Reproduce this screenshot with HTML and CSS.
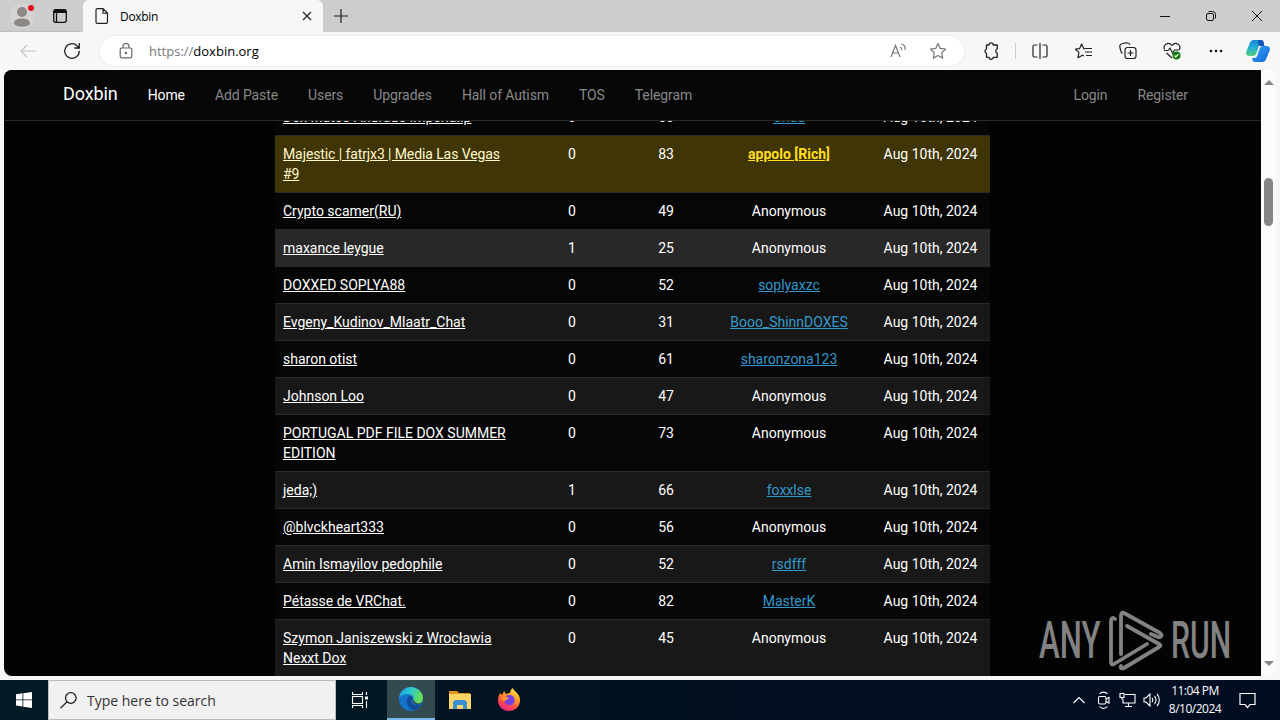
FILE: index.html
```html
<!doctype html>
<html lang="en">
<head>
    <meta charset="UTF-8">
    <title>Doxbin</title>
    <link rel="stylesheet" href="styles.css">
</head>
<body>
    <!-- Tab strip -->
    <div class="tabs">
        <div class="tabs-left">
            <svg class="avatar" width="26" height="26" viewBox="0 0 26 26"><circle cx="13" cy="13" r="12.5" fill="#d6d4d2"/><circle cx="13" cy="9" r="5" fill="#8b8886"/><path d="M5 21c0-4 3-5.500 8-5.500s8 1.500 8 5.500c-3 3.500-13 3.500-16 0z" fill="#8b8886"/><circle cx="22" cy="5" r="3" fill="#e00b1c"/></svg>
            <svg class="workspaces" width="16" height="16" viewBox="0 0 16 16" fill="none" stroke="#111" stroke-width="1.300"><rect x="1.700" y="1.700" width="12.600" height="12.600" rx="2"/><path d="M2 3.500h12" stroke-width="3"/><path d="M4.500 4v10"/></svg>
        </div>
        <div class="tab">
            <svg width="14" height="16" viewBox="0 0 14 16" fill="none" stroke="#222" stroke-width="1.200"><path d="M2.500.600h5.500l4.500 4.500v8.800a1.500 1.500 0 0 1-1.500 1.500h-8.500a1.500 1.500 0 0 1-1.500-1.500v-11.800a1.500 1.500 0 0 1 1.500-1.500zM8 .600v4.500h4.500"/></svg>
            <span class="tab-title">Doxbin</span>
            <svg width="10" height="10" viewBox="0 0 10 10" stroke="#222" stroke-width="1.200"><path d="M1 1l8 8M9 1l-8 8"/></svg>
        </div>
        <svg class="new-tab" width="14" height="14" viewBox="0 0 14 14" stroke="#222" stroke-width="1.200"><path d="M7 0v14M0 7h14"/></svg>
        <div class="window-buttons">
            <svg width="12" height="12" viewBox="0 0 12 12" stroke="#111"><path d="M1 6.500h10"/></svg>
            <svg width="12" height="12" viewBox="0 0 12 12" fill="none" stroke="#111"><rect x="1.500" y="3.500" width="7" height="7" rx="1.500"/><path d="M3.500 1.500h4a3 3 0 0 1 3 3v4"/></svg>
            <svg width="12" height="12" viewBox="0 0 12 12" stroke="#111"><path d="M1 1l10 10M11 1l-10 10"/></svg>
        </div>
    </div>

    <!-- Address bar -->
    <div class="toolbar">
        <svg class="back" width="16" height="14" viewBox="0 0 16 14" fill="none" stroke="#c4c4c4" stroke-width="1.200"><path d="M16 7h-15M7 1l-6 6 6 6"/></svg>
        <svg class="reload" width="18" height="18" viewBox="0 0 18 18" fill="none" stroke="#222" stroke-width="1.300"><path d="M16.300 9a7.300 7.300 0 1 1-2.300-5.300l2 2M16.300 1v5h-5"/></svg>
        <div class="address">
            <svg width="14" height="16" viewBox="0 0 14 16" fill="none" stroke="#666" stroke-width="1.200"><rect x="1.200" y="5" width="11.600" height="9.800" rx="1.500"/><path d="M4 5v-1.500a3 3 0 0 1 6 0v1.500"/><circle cx="7" cy="10" r=".6"/></svg>
            <span class="url"><span class="scheme">https://</span>doxbin.org</span>
            <svg class="read-aloud" width="17" height="16" viewBox="0 0 17 16" fill="none" stroke="#777" stroke-width="1.200"><path d="M1 14l4.500-11.500 4.500 11.500M2.700 10h5.600M10 4c1.300.5 1.700 1.700 1.700 3M11 1c3 .5 4.500 3 4.200 6"/></svg>
            <svg width="18" height="18" viewBox="0 0 18 18" fill="none" stroke="#777" stroke-width="1.200"><path d="M9 1.500l2.300 4.900 5.300.700-3.900 3.700 1 5.300-4.700-2.600-4.700 2.600 1-5.300-3.900-3.700 5.300-.700z" stroke-linejoin="round"/></svg>
        </div>
        <div class="actions">
            <svg class="extensions" width="18" height="18" viewBox="0 0 18 18" fill="none" stroke="#222" stroke-width="1.300"><path d="M4.500 3h2.500a2.100 2.100 0 0 1 4.200 0h4v4a2.100 2.100 0 0 0 0 4v4.300h-4a2.100 2.100 0 0 1-4.200 0h-2.500v-4a2.200 2.200 0 0 1 0-4.200z" stroke-linejoin="round"/></svg>
            <span class="divider"></span>
            <svg width="18" height="18" viewBox="0 0 18 18" fill="none" stroke="#222" stroke-width="1.200"><path d="M6.500 3h-3a1.500 1.500 0 0 0-1.500 1.500v9a1.500 1.500 0 0 0 1.500 1.500h3M11.500 3h3a1.500 1.500 0 0 1 1.500 1.500v9a1.500 1.500 0 0 1-1.500 1.500h-3M9 1v16"/></svg>
            <svg width="18" height="18" viewBox="0 0 18 18" fill="none" stroke="#222" stroke-width="1.200"><path d="M10 7l-1.200-.3-2.200-4.700-2 4.600-4.100.6 3.400 3.200-.9 5.400 4.500-2.600 1.500.8M10 6.500h7M10 10h7M11 13.500h6" stroke-linejoin="round"/></svg>
            <svg width="18" height="18" viewBox="0 0 18 18" fill="none" stroke="#222" stroke-width="1.200"><rect x="6" y="5.500" width="11" height="11" rx="2.500"/><path d="M11.500 8v6M8.500 11h6M3.500 11.500c-2-1-3-7.500-2.500-8.500.5-1.500 6.500-2.500 8-2 1 .3 1.600 1 1.800 2"/></svg>
            <svg width="18" height="18" viewBox="0 0 18 18" fill="none" stroke="#222" stroke-width="1.200"><path d="M1.500 7.500c-2-5 4-8.500 7.500-4 3.500-4.500 9.500-1 7.500 4M1 8.500h4l2-2.500 2.500 5 2-3h5M3.500 11l5.500 5"/><circle cx="13.500" cy="13.500" r="4" fill="#107c10" stroke="none"/><path d="M11.500 13.500l1.300 1.400 2.700-2.800" stroke="#fff"/></svg>
            <svg width="18" height="18" viewBox="0 0 18 18" fill="#111"><circle cx="4" cy="9" r="1.300"/><circle cx="9" cy="9" r="1.300"/><circle cx="14" cy="9" r="1.300"/></svg>
        </div>
        <svg class="copilot" width="24" height="24" viewBox="0 0 24 24">
            <defs>
                <linearGradient id="cp-a" x1="0" y1="0" x2="0" y2="1"><stop offset="0" stop-color="#1587dd"/><stop offset=".5" stop-color="#25afd0"/><stop offset="1" stop-color="#56d07a"/></linearGradient>
                <linearGradient id="cp-b" x1="0" y1="0" x2="1" y2="1"><stop offset="0" stop-color="#36a4f4"/><stop offset="1" stop-color="#1265dc"/></linearGradient>
            </defs>
            <path d="M8 1h7c2 0 2.500 1.500 3 4h-2c-2 0-3 1-3.500 3l-2 6c-.6 2-1.500 3-4 3h-3c-3 0-4-2-3-5l3-7c1-3 2-4 4.500-4z" fill="url(#cp-a)"/>
            <path d="M16 23h-7c-2 0-2.500-1.500-3-4h2c2 0 3-1 3.500-3l2-6c.6-2 1.500-3 4-3h3c3 0 4 2 3 5l-3 7c-1 3-2 4-4.500 4z" fill="url(#cp-b)"/>
            <path d="M12 1h3c2 0 2.500 1.500 3 4l.5 2h-4c-1.500 0-2.500-1-2.500-6z" fill="#1455b4"/>
        </svg>
    </div>

    <!-- Page -->
    <div class="viewport">
        <div class="page">
            <nav class="navbar">
                <a class="brand">Doxbin</a>
                <a class="active">Home</a>
                <a>Add Paste</a>
                <a>Users</a>
                <a>Upgrades</a>
                <a>Hall of Autism</a>
                <a>TOS</a>
                <a>Telegram</a>
                <a class="push-right">Login</a>
                <a>Register</a>
            </nav>
            <div class="content">
                <table>
                    <colgroup><col class="col-title"><col class="col-comments"><col class="col-views"><col class="col-user"><col class="col-date"></colgroup>
                    <tr><td><a>Dox Mateo Andrade Imperial.p</a></td><td>0</td><td>60</td><td><a class="user">Chad</a></td><td>Aug 10th, 2024</td></tr>
                    <tr class="rich"><td><a>Majestic | fatrjx3 | Media Las Vegas #9</a></td><td>0</td><td>83</td><td><a class="user">appolo [Rich]</a></td><td>Aug 10th, 2024</td></tr>
                    <tr><td><a>Crypto scamer(RU)</a></td><td>0</td><td>49</td><td>Anonymous</td><td>Aug 10th, 2024</td></tr>
                    <tr class="hovered"><td><a>maxance leygue</a></td><td>1</td><td>25</td><td>Anonymous</td><td>Aug 10th, 2024</td></tr>
                    <tr><td><a>DOXXED SOPLYA88</a></td><td>0</td><td>52</td><td><a class="user">soplyaxzc</a></td><td>Aug 10th, 2024</td></tr>
                    <tr><td><a>Evgeny_Kudinov_Mlaatr_Chat</a></td><td>0</td><td>31</td><td><a class="user">Booo_ShinnDOXES</a></td><td>Aug 10th, 2024</td></tr>
                    <tr><td><a>sharon otist</a></td><td>0</td><td>61</td><td><a class="user">sharonzona123</a></td><td>Aug 10th, 2024</td></tr>
                    <tr><td><a>Johnson Loo</a></td><td>0</td><td>47</td><td>Anonymous</td><td>Aug 10th, 2024</td></tr>
                    <tr><td><a>PORTUGAL PDF FILE DOX SUMMER EDITION</a></td><td>0</td><td>73</td><td>Anonymous</td><td>Aug 10th, 2024</td></tr>
                    <tr><td><a>jeda;)</a></td><td>1</td><td>66</td><td><a class="user">foxxlse</a></td><td>Aug 10th, 2024</td></tr>
                    <tr><td><a>@blvckheart333</a></td><td>0</td><td>56</td><td>Anonymous</td><td>Aug 10th, 2024</td></tr>
                    <tr><td><a>Amin Ismayilov pedophile</a></td><td>0</td><td>52</td><td><a class="user">rsdfff</a></td><td>Aug 10th, 2024</td></tr>
                    <tr><td><a>Pétasse de VRChat.</a></td><td>0</td><td>82</td><td><a class="user">MasterK</a></td><td>Aug 10th, 2024</td></tr>
                    <tr><td><a>Szymon Janiszewski z Wrocławia Nexxt Dox</a></td><td>0</td><td>45</td><td>Anonymous</td><td>Aug 10th, 2024</td></tr>
                </table>
            </div>
        </div>
        <div class="scrollbar">
            <span class="arrow-up"></span>
            <span class="thumb"></span>
            <span class="arrow-down"></span>
        </div>
    </div>

    <div class="watermark">
        <span class="wm-text"><span class="wm-any">ANY</span></span>
        <svg width="56" height="62" viewBox="0 0 56 62" fill="none" stroke="#828282" stroke-width="3.800" stroke-linejoin="round" stroke-linecap="round"><path d="M7 9c-2-2-4-1-4 2v41c0 2 1 3 3 2l33-20"/><path d="M13 44v-38c0-3 1-4 3-3l36 20c3 2 1 5-2 4l-7-3"/><path d="M19 16l32 18c2 1 2 2 0 3l-35 21c-2 1-4 0-3-2"/></svg>
        <span class="wm-text"><span class="wm-run">RUN</span></span>
    </div>

    <!-- Taskbar -->
    <div class="taskbar">
        <div class="start"><svg width="16" height="16" viewBox="0 0 16 16" fill="#fff"><path d="M0 2.300l6.500-1v6.200h-6.500zM7.300 1.200l8.700-1.200v7.500h-8.700zM0 8.300h6.500v6.300l-6.500-1zM7.300 8.300h8.700v7.700l-8.700-1.200z"/></svg></div>
        <div class="search">
            <svg width="17" height="17" viewBox="0 0 17 17" fill="none" stroke="#222" stroke-width="1.300"><circle cx="10.800" cy="6" r="5.300"/><path d="M7 9.800l-6.500 6.500"/></svg>
            <span>Type here to search</span>
        </div>
        <div class="app"><svg width="18" height="18" viewBox="0 0 18 18" fill="none" stroke="#fff" stroke-width="1.100"><path d="M1.500 1v2.500h10v-2.500M1.500 17v-2.500h10v2.500M15.500 1v3M15.500 10v7"/><rect x="1.500" y="5.500" width="10" height="7"/><path d="M14 7h3" stroke-width="3"/></svg></div>
        <div class="app running">
            <svg width="24" height="24" viewBox="0 0 24 24">
                <defs><linearGradient id="edge-a" x1="0" y1="0" x2="1" y2=".3"><stop offset="0" stop-color="#1b9de2"/><stop offset=".5" stop-color="#2cc8ce"/><stop offset="1" stop-color="#68dc58"/></linearGradient></defs>
                <circle cx="12" cy="12" r="12" fill="#1372ca"/>
                <path d="M0 11c1-7 6-11 12-11s12 5 12 11c0 4-3 6-6 6-3 0-5-1-4-3 2-4-1-7-5-7-4 0-7 1-9 4z" fill="url(#edge-a)"/>
                <path d="M9 10c-3 5 0 13 7 13 3-1 5-3 6.500-6-4 2-10 2-10-2 0-2 1-2 1-3 0-3-3-4-4.500-2z" fill="#124b95"/>
                <path d="M24 15c-2 3-9 4-10 .5-1-1 .3-1.500.8-3.500 0 4 5 6 9.200 3z" fill="#334b50"/>
            </svg>
        </div>
        <div class="app"><svg width="22" height="20" viewBox="0 0 22 20"><path d="M0 1h8l2 2h11v4h-21z" fill="#e3961c"/><path d="M0 4h22v15h-22z" fill="#fbd568"/><path d="M4 19v-7l2-2h10l2 2v7h-4v-4h-6v4z" fill="#3b8fd1"/></svg></div>
        <div class="app">
            <svg width="24" height="24" viewBox="0 0 24 24">
                <defs><linearGradient id="ff" x1=".8" y1="0" x2=".3" y2="1"><stop offset="0" stop-color="#fff04a"/><stop offset=".4" stop-color="#ff9a28"/><stop offset=".75" stop-color="#ff4250"/><stop offset="1" stop-color="#e4238c"/></linearGradient></defs>
                <path d="M3 5l2 2 2-4 2 3c2-1 3-1 4-1 0-2 1-4 3-5 0 3 7 5 7 12 0 7-5 11-11 11s-11-4-11-11c0-3 1-5 2-7z" fill="url(#ff)"/>
                <circle cx="12.500" cy="12" r="5.200" fill="#7542e5"/><path d="M5 9c3-1 5 0 7 1-1 2-3 1-4 3-3 0-4-2-3-4z" fill="#ff9a28"/>
            </svg>
        </div>
        <div class="tray">
            <svg class="chevron" width="12" height="8" viewBox="0 0 12 8" fill="none" stroke="#fff" stroke-width="1.200"><path d="M.5 7l5.500-5.500 5.500 5.500"/></svg>
            <svg class="meet" width="14" height="18" viewBox="0 0 14 18" fill="none" stroke="#fff" stroke-width="1.100"><rect x="1.500" y="5.500" width="7.500" height="7.500" rx="1.500"/><path d="M9 8l3-1.500v5.500l-3-1.500M2.500 3c2-2.500 6-2.500 8 0M2.500 15.500c2 2.500 6 2.500 8 0"/></svg>
            <svg class="network" width="17" height="16" viewBox="0 0 17 16" fill="none" stroke="#fff" stroke-width="1.100"><path d="M6 2.500h10v8.500h-12v-4M9.500 11v3M6 14.500h7"/><rect x="1" y="1.500" width="4" height="4"/><path d="M3 5.500v2"/></svg>
            <svg class="volume" width="17" height="14" viewBox="0 0 17 14" fill="none" stroke="#fff" stroke-width="1.100"><path d="M1 5h2l4-4v12l-4-4h-2zM9 5c1 1 1 3 0 4M11.500 3c2 2 2 6 0 8M14 1c3 3 3 9 0 12"/></svg>
            <div class="clock">11:04 PM<br>8/10/2024</div>
            <svg width="17" height="17" viewBox="0 0 17 17" fill="none" stroke="#fff" stroke-width="1.200"><path d="M1 1.500h15v11h-5l-2.500 3-2.500-3h-5z"/></svg>
        </div>
    </div>
</body>
</html>
```
FILE: styles.css
```css
* {
    box-sizing: border-box;
}

body {
    margin: 0;
    width: 1280px;
    height: 720px;
    overflow: hidden;
    background: #f7f7f7;
    font-family: "Open Sans", sans-serif;
    display: flex;
    flex-direction: column;
}

svg {
    display: block;
    flex: none;
}

/* tab strip */
.tabs {
    height: 32px;
    flex: none;
    background: #cdcdcd;
    display: flex;
    align-items: center;
}

.tabs-left {
    width: 83px;
    height: 32px;
    display: flex;
    align-items: center;
    gap: 17px;
    padding-left: 9px;
    border-bottom: 1px solid #bdbdbd;
    border-radius: 0 0 5px 0;
}

.tab {
    width: 240px;
    height: 32px;
    background: #f7f7f7;
    border-radius: 6px 6px 0 0;
    display: flex;
    align-items: center;
    padding: 0 11px 0 12px;
}

.tab-title {
    flex: 1;
    margin-left: 11px;
    font-size: 12px;
    letter-spacing: -0.3px;
}

.new-tab {
    margin-left: 11px;
}

.window-buttons {
    margin-left: auto;
    margin-right: 17px;
    display: flex;
    gap: 34px;
}

/* address bar */
.toolbar {
    height: 38px;
    flex: none;
    display: flex;
    align-items: center;
    padding-left: 20px;
}

.reload {
    margin-left: 27px;
}

.address {
    width: 864px;
    height: 30px;
    margin-left: 19px;
    padding: 0 17px 0 19px;
    background: #fff;
    border-radius: 15px;
    box-shadow: 0 0 2px #ddd;
    display: flex;
    align-items: center;
}

.url {
    flex: 1;
    margin-left: 16px;
    font-size: 13px;
}

.scheme {
    color: #777;
}

.read-aloud {
    margin-right: 22px;
}

.actions {
    display: flex;
    align-items: center;
    gap: 26px;
    margin-left: 18px;
}

.divider {
    width: 1px;
    height: 16px;
    margin: 0 -11px 0 -11px;
    background: #ccc;
}

.copilot {
    margin-left: 21px;
}

/* page */
.viewport {
    height: 606px;
    flex: none;
    margin: 0 4px;
    display: flex;
    border-radius: 8px;
    overflow: hidden;
}

.page {
    width: 1257px;
    background: #030303;
    color: #fff;
    font-family: Roboto, sans-serif;
    font-size: 14px;
    overflow: hidden;
}

.navbar {
    position: relative;
    height: 51px;
    padding: 0 73px 0 59px;
    display: flex;
    align-items: center;
    gap: 30px;
    background: #060606;
    border-bottom: 1px solid #282828;
    letter-spacing: -0.1px;
}

.navbar a {
    color: #888;
}

.navbar .brand {
    color: #fff;
    font-size: 18px;
    line-height: 20px;
    padding-bottom: 2px;
}

.navbar .active {
    color: #fff;
}

.navbar .push-right {
    margin-left: auto;
}

/* scrolled up under the navbar */
.content {
    width: 715px;
    margin: -23px 0 0 271px;
}

table {
    width: 715px;
    table-layout: fixed;
    border-collapse: collapse;
    line-height: 20px;
}

.col-title { width: 244px; }
.col-comments { width: 106px; }
.col-views { width: 82px; }
.col-user { width: 164px; }
.col-date { width: 119px; }

td {
    padding: 8px;
    border-top: 1px solid #282828;
    text-align: center;
    vertical-align: top;
    white-space: nowrap;
}

td:first-child {
    text-align: left;
    white-space: normal;
}

td a {
    color: #fff;
    text-decoration: underline;
}

td .user {
    color: #3498cb;
}

tr {
    background: #060606;
}

tr:nth-child(even) {
    background: #181818;
}

tr.hovered {
    background: #282828;
}

tr.rich {
    background: #403507;
}

.rich a {
    color: #fff8cc;
}

.rich td:first-child {
    letter-spacing: -0.1px;
}

.rich .user {
    color: #ffdf20;
    font-weight: bold;
}

.scrollbar {
    width: 15px;
    background: #fcfcfc;
    display: flex;
    flex-direction: column;
    align-items: center;
    padding: 10px 0;
}

.arrow-up {
    border: 5px solid transparent;
    border-top: none;
    border-bottom: 5px solid #858585;
}

.thumb {
    width: 9px;
    height: 48px;
    margin-top: 93px;
    border-radius: 5px;
    background: #858585;
}

.arrow-down {
    margin-top: auto;
    border: 5px solid transparent;
    border-bottom: none;
    border-top: 5px solid #858585;
}

/* laid over the page corner */
.watermark {
    position: absolute;
    left: 1039px;
    top: 610px;
    display: flex;
    align-items: center;
    gap: 7px;
    color: #828282;
}

.wm-text {
    width: 62px;
    height: 62px;
    font: 500 52px/62px Roboto, sans-serif;
}

.wm-any,
.wm-run {
    display: inline-block;
    transform: scaleX(0.6);
    transform-origin: 0 0;
}

.wm-run {
    transform: scaleX(0.58);
}

/* taskbar */
.taskbar {
    height: 40px;
    margin-top: 4px;
    flex: none;
    display: flex;
    background: linear-gradient(90deg, #021b24, #020f20 60%, #020d22);
    color: #fff;
}

.start {
    width: 48px;
    display: flex;
    align-items: center;
    justify-content: center;
}

.search {
    width: 288px;
    padding-left: 11px;
    display: flex;
    align-items: center;
    gap: 10px;
    background: #f1f1f1;
    border: 1px solid #bcbcbc;
    color: #333;
    font-size: 14px;
}

.app {
    width: 48px;
    margin-right: 1px;
    display: flex;
    align-items: center;
    justify-content: center;
}

.running {
    margin-left: 2px;
    background: #334b50;
    border-bottom: 2px solid #76b9ed;
}

.tray {
    margin-left: auto;
    margin-right: 24px;
    display: flex;
    align-items: center;
}

.chevron { margin-right: 12px; }
.meet { margin-right: 8px; }
.network { margin-right: 7px; }
.volume { margin-right: 8px; }

.clock {
    width: 54px;
    margin-right: 17px;
    font-size: 12px;
    line-height: 18px;
    letter-spacing: -0.5px;
    text-align: center;
    white-space: nowrap;
}
```
